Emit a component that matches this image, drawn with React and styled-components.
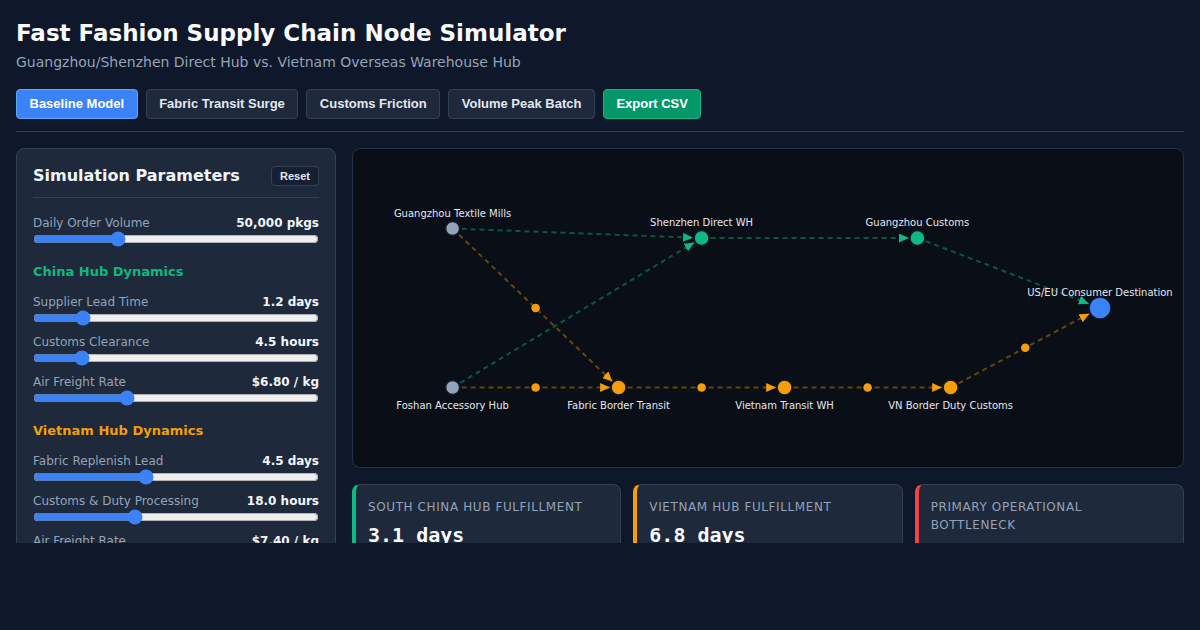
import React, { useState } from 'react'
import styled, { createGlobalStyle } from 'styled-components'

const GlobalStyle = createGlobalStyle`
  html, body {
    margin: 0;
    padding: 0;
    background: #0f172a;
  }
  * {
    box-sizing: border-box;
  }
`

const Page = styled.div`
  height: 543px;
  overflow: hidden;
  padding: 20px 16px 0;
  font-family: "DejaVu Sans", Verdana, sans-serif;
  color: #f1f5f9;
  background: #0f172a;
`

const Header = styled.header`
  padding-bottom: 12px;
  border-bottom: 1px solid #334155;
  margin-bottom: 16px;
`

const Title = styled.h1`
  margin: 0;
  font-size: 23px;
  line-height: 1.2;
  font-weight: 700;
  color: #f8fafc;
`

const Subtitle = styled.p`
  margin: 4px 0 0;
  font-size: 14px;
  line-height: 20px;
  color: #94a3b8;
`

const Toolbar = styled.div`
  display: flex;
  gap: 8px;
  margin-top: 17px;
`

const ScenarioButton = styled.button`
  height: 30px;
  padding: 0 12.5px;
  border-radius: 4px;
  font-family: "Liberation Sans", Arial, sans-serif;
  font-size: 13px;
  font-weight: 700;
  cursor: pointer;
  background: ${p => (p.$variant === 'active' ? '#3b82f6' : p.$variant === 'export' ? '#059669' : '#1e293b')};
  border: 1px solid ${p => (p.$variant === 'active' ? '#60a5fa' : p.$variant === 'export' ? '#10b981' : '#334155')};
  color: ${p => (p.$variant ? '#ffffff' : '#e2e8f0')};
`

const Main = styled.main`
  display: grid;
  grid-template-columns: 320px 1fr;
  gap: 16px;
  align-items: start;
`

const Panel = styled.section`
  background: #1e293b;
  border: 1px solid #334155;
  border-radius: 8px;
  padding: 16px;
`

const PanelHeader = styled.div`
  display: flex;
  align-items: center;
  justify-content: space-between;
  height: 22px;
  box-sizing: content-box;
  padding-bottom: 10px;
  border-bottom: 1px solid #334155;
  margin-bottom: 17px;
`

const PanelTitle = styled.h2`
  margin: 0;
  font-size: 16px;
  line-height: 24px;
  font-weight: 700;
  color: #f1f5f9;
`

const ResetButton = styled.button`
  height: 20px;
  padding: 0 8px;
  font-family: "Liberation Sans", Arial, sans-serif;
  font-size: 11px;
  font-weight: 700;
  color: #e2e8f0;
  background: #172033;
  border: 1px solid #334155;
  border-radius: 4px;
  cursor: pointer;
`

const SectionHeading = styled.h3`
  margin: 17px 0 14px;
  font-size: 13px;
  line-height: 16px;
  font-weight: 700;
  color: ${p => p.$color};
`

const ParamGroup = styled.div`
  margin-bottom: 8px;
`

const ParamRow = styled.div`
  display: flex;
  justify-content: space-between;
  font-size: 12px;
  line-height: 16px;
`

const ParamLabel = styled.span`
  color: #94a3b8;
`

const ParamValue = styled.span`
  font-weight: 700;
  color: #f1f5f9;
`

const Range = styled.input`
  display: block;
  width: 100%;
  height: 16px;
  margin: 0;
  accent-color: #3b82f6;
`

const RightColumn = styled.div`
  display: flex;
  flex-direction: column;
  gap: 16px;
  min-width: 0;
`

const GraphPanel = styled.div`
  height: 320px;
  background: #0a0e17;
  border: 1px solid #243044;
  border-radius: 8px;
  overflow: hidden;
`

const Cards = styled.div`
  display: grid;
  grid-template-columns: repeat(3, 1fr);
  gap: 12px;
`

const Card = styled.div`
  background: #1e293b;
  border: 1px solid #334155;
  border-left: 4px solid ${p => p.$accent};
  border-radius: 8px;
  padding: 13px 12px 16px;
`

const CardLabel = styled.div`
  font-size: 12px;
  line-height: 18px;
  letter-spacing: 0.05em;
  text-transform: uppercase;
  color: #94a3b8;
`

const CardValue = styled.div`
  margin-top: 7px;
  font-family: "DejaVu Sans Mono", "Liberation Mono", monospace;
  font-size: 20px;
  font-weight: 700;
  line-height: 24px;
  color: #f8fafc;
`

const W = 830
const H = 318

const COLORS = {
  source: '#94a3b8',
  china: '#10b981',
  vn: '#f59e0b',
  dest: '#3b82f6',
}

const nodes = {
  gtm: { label: 'Guangzhou Textile Mills', x: 0.12, y: 0.25, kind: 'source', r: 7, top: true },
  fah: { label: 'Foshan Accessory Hub', x: 0.12, y: 0.75, kind: 'source', r: 7 },
  sdw: { label: 'Shenzhen Direct WH', x: 0.42, y: 0.28, kind: 'china', r: 7.5, top: true },
  gc: { label: 'Guangzhou Customs', x: 0.68, y: 0.28, kind: 'china', r: 7.5, top: true },
  fbt: { label: 'Fabric Border Transit', x: 0.32, y: 0.75, kind: 'vn', r: 7.5 },
  vtw: { label: 'Vietnam Transit WH', x: 0.52, y: 0.75, kind: 'vn', r: 7.5 },
  vbdc: { label: 'VN Border Duty Customs', x: 0.72, y: 0.75, kind: 'vn', r: 7.5 },
  dest: { label: 'US/EU Consumer Destination', x: 0.9, y: 0.5, kind: 'dest', r: 11, top: true },
}

const edges = [
  ['gtm', 'sdw', 'china'],
  ['fah', 'sdw', 'china'],
  ['sdw', 'gc', 'china'],
  ['gc', 'dest', 'china'],
  ['gtm', 'fbt', 'vn'],
  ['fah', 'fbt', 'vn'],
  ['fbt', 'vtw', 'vn'],
  ['vtw', 'vbdc', 'vn'],
  ['vbdc', 'dest', 'vn'],
]

const pos = n => ({ x: n.x * W, y: n.y * H })

const NetworkGraph = () => (
  <svg width="100%" height={H} viewBox={`0 0 ${W} ${H}`}>
    <defs>
      {['china', 'vn'].map(k => (
        <marker
          key={k}
          id={`arrow-${k}`}
          markerWidth="10"
          markerHeight="9"
          refX="10"
          refY="4.5"
          orient="auto"
          markerUnits="userSpaceOnUse"
        >
          <path d="M0,0 L10,4.5 L0,9 z" fill={COLORS[k]} />
        </marker>
      ))}
    </defs>

    {edges.map(([from, to, kind]) => {
      const a = pos(nodes[from])
      const b = pos(nodes[to])
      const dx = b.x - a.x
      const dy = b.y - a.y
      const len = Math.hypot(dx, dy)
      const cut = nodes[to].r + 1
      const ex = b.x - (dx / len) * cut
      const ey = b.y - (dy / len) * cut
      return (
        <g key={from + to}>
          <line
            x1={a.x}
            y1={a.y}
            x2={ex}
            y2={ey}
            stroke={COLORS[kind]}
            strokeOpacity={kind === 'vn' ? 0.38 : 0.42}
            strokeWidth="2"
            strokeDasharray="5 4"
            markerEnd={`url(#arrow-${kind})`}
          />
          {kind === 'vn' && <circle cx={(a.x + b.x) / 2} cy={(a.y + b.y) / 2} r="4.3" fill={COLORS.vn} />}
        </g>
      )
    })}

    {Object.entries(nodes).map(([id, n]) => {
      const p = pos(n)
      return (
        <g key={id}>
          <circle cx={p.x} cy={p.y} r={n.r} fill={COLORS[n.kind]} stroke="#111a2c" strokeWidth="1.5" />
          <text
            x={p.x}
            y={n.top ? p.y - 12 : p.y + 21}
            textAnchor="middle"
            fontFamily="DejaVu Sans, sans-serif"
            fontSize="10"
            fill="#e2e8f0"
          >
            {n.label}
          </text>
        </g>
      )
    })}
  </svg>
)

const Param = ({ label, value, format, min, max, step, onChange }) => (
  <ParamGroup>
    <ParamRow>
      <ParamLabel>{label}</ParamLabel>
      <ParamValue>{format(value)}</ParamValue>
    </ParamRow>
    <Range type="range" min={min} max={max} step={step} value={value} onChange={e => onChange(Number(e.target.value))} />
  </ParamGroup>
)

const defaults = {
  volume: 50000,
  cnLead: 1.2,
  cnCustoms: 4.5,
  cnFreight: 6.8,
  vnLead: 4.5,
  vnCustoms: 18,
  vnFreight: 7.4,
}

const App = () => {
  const [p, setP] = useState(defaults)
  const set = key => v => setP(prev => ({ ...prev, [key]: v }))

  return (
    <>
      <GlobalStyle />
      <Page>
        <Header>
          <Title>Fast Fashion Supply Chain Node Simulator</Title>
          <Subtitle>Guangzhou/Shenzhen Direct Hub vs. Vietnam Overseas Warehouse Hub</Subtitle>
          <Toolbar>
            <ScenarioButton $variant="active">Baseline Model</ScenarioButton>
            <ScenarioButton>Fabric Transit Surge</ScenarioButton>
            <ScenarioButton>Customs Friction</ScenarioButton>
            <ScenarioButton>Volume Peak Batch</ScenarioButton>
            <ScenarioButton $variant="export">Export CSV</ScenarioButton>
          </Toolbar>
        </Header>

        <Main>
          <Panel>
            <PanelHeader>
              <PanelTitle>Simulation Parameters</PanelTitle>
              <ResetButton onClick={() => setP(defaults)}>Reset</ResetButton>
            </PanelHeader>

            <Param
              label="Daily Order Volume"
              value={p.volume}
              format={v => `${v.toLocaleString('en-US')} pkgs`}
              min={10000}
              max={150000}
              step={1000}
              onChange={set('volume')}
            />

            <SectionHeading $color="#10b981">China Hub Dynamics</SectionHeading>
            <Param label="Supplier Lead Time" value={p.cnLead} format={v => `${v.toFixed(1)} days`} min={0.5} max={5} step={0.1} onChange={set('cnLead')} />
            <Param label="Customs Clearance" value={p.cnCustoms} format={v => `${v.toFixed(1)} hours`} min={1} max={24} step={0.5} onChange={set('cnCustoms')} />
            <Param label="Air Freight Rate" value={p.cnFreight} format={v => `$${v.toFixed(2)} / kg`} min={2} max={17} step={0.1} onChange={set('cnFreight')} />

            <SectionHeading $color="#f59e0b">Vietnam Hub Dynamics</SectionHeading>
            <Param label="Fabric Replenish Lead" value={p.vnLead} format={v => `${v.toFixed(1)} days`} min={1} max={10} step={0.1} onChange={set('vnLead')} />
            <Param label="Customs & Duty Processing" value={p.vnCustoms} format={v => `${v.toFixed(1)} hours`} min={1} max={50} step={0.5} onChange={set('vnCustoms')} />
            <Param label="Air Freight Rate" value={p.vnFreight} format={v => `$${v.toFixed(2)} / kg`} min={2} max={17} step={0.1} onChange={set('vnFreight')} />
          </Panel>

          <RightColumn>
            <GraphPanel>
              <NetworkGraph />
            </GraphPanel>
            <Cards>
              <Card $accent="#10b981">
                <CardLabel>South China Hub Fulfillment</CardLabel>
                <CardValue>3.1 days</CardValue>
              </Card>
              <Card $accent="#f59e0b">
                <CardLabel>Vietnam Hub Fulfillment</CardLabel>
                <CardValue>6.8 days</CardValue>
              </Card>
              <Card $accent="#ef4444">
                <CardLabel>Primary Operational Bottleneck</CardLabel>
                <CardValue>VN Customs</CardValue>
              </Card>
            </Cards>
          </RightColumn>
        </Main>
      </Page>
    </>
  )
}

export default App
